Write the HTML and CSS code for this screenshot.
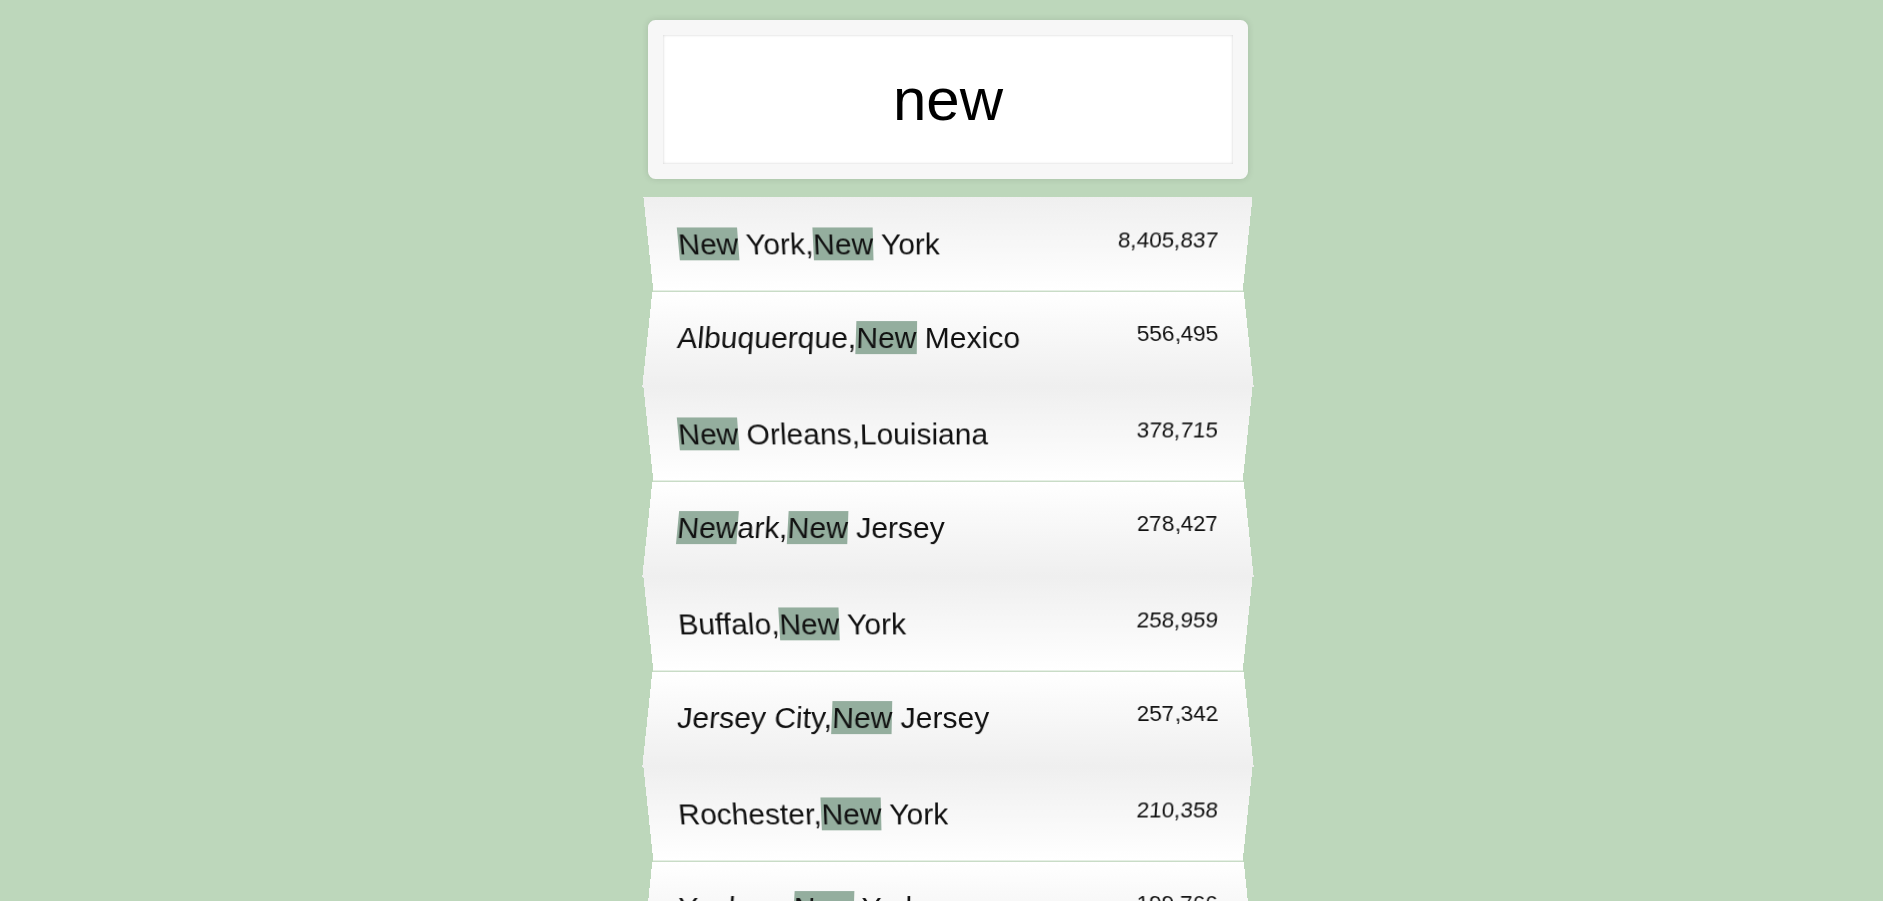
FILE: index.html
```html
<!DOCTYPE html>
<html lang="en">
<head>
<meta charset="UTF-8">
<title>Type Ahead</title>
<link rel="stylesheet" href="styles.css">
</head>
<body>
<form class="search-form">
  <input type="text" class="search" value="new" placeholder="City or State" spellcheck="true" autofocus>
  <ul class="suggestions">
    <li><span class="name"><span class="hl">New</span> York,<span class="hl">New</span> York</span><span class="population">8,405,837</span></li>
    <li><span class="name">Albuquerque,<span class="hl">New</span> Mexico</span><span class="population">556,495</span></li>
    <li><span class="name"><span class="hl">New</span> Orleans,Louisiana</span><span class="population">378,715</span></li>
    <li><span class="name"><span class="hl">New</span>ark,<span class="hl">New</span> Jersey</span><span class="population">278,427</span></li>
    <li><span class="name">Buffalo,<span class="hl">New</span> York</span><span class="population">258,959</span></li>
    <li><span class="name">Jersey City,<span class="hl">New</span> Jersey</span><span class="population">257,342</span></li>
    <li><span class="name">Rochester,<span class="hl">New</span> York</span><span class="population">210,358</span></li>
    <li><span class="name">Yonkers,<span class="hl">New</span> York</span><span class="population">199,766</span></li>
  </ul>
</form>
<script src="script.js"></script>
</body>
</html>
```

FILE: styles.css
```css
html {
  box-sizing: border-box;
  background: #bdd7bb;
  font-family: "Liberation Sans", Arial, sans-serif;
  font-size: 30px;
  font-weight: 200;
  overflow: hidden;
}

*, *::before, *::after {
  box-sizing: inherit;
}

body {
  margin: 0;
  padding-left: 13px;
}

.search-form {
  width: 600px;
  margin: 20px auto 0;
}

.search {
  display: block;
  width: 100%;
  margin: 0;
  padding: 30px;
  text-align: center;
  outline: 0;
  border: 15px solid #f7f7f7;
  border-radius: 7.5px;
  font-family: inherit;
  font-size: 60px;
  line-height: 69px;
  color: #000;
  caret-color: #000;
  background: #fff;
  position: relative;
  z-index: 2;
  box-shadow: 0 0 7.5px rgba(0, 0, 0, 0.12), inset 0 0 3px rgba(0, 0, 0, 0.19);
}

.suggestions {
  margin: 14px 0 0;
  padding: 0;
  position: relative;
}

.suggestions li {
  list-style: none;
  background: #fff;
  border-bottom: 1px solid #c9dcc7;
  margin: 0;
  padding: 30px;
  display: flex;
  justify-content: space-between;
  text-transform: capitalize;
  color: #111;
}

.suggestions li:nth-child(even) {
  transform: perspective(150px) rotateX(3deg) translateY(3px) scale(1.001);
  background: linear-gradient(to bottom, #ffffff 0%, #efefef 100%);
  border-bottom-color: #efefef;
}

.suggestions li:nth-child(odd) {
  transform: perspective(150px) rotateX(-3deg) translateY(4.5px);
  background: linear-gradient(to top, #ffffff 0%, #efefef 100%);
}

.population {
  font-size: 22.5px;
}

.hl {
  background: #94ae9e;
}
```

FILE: script.js
```js
const input = document.querySelector('.search');
input.focus();
input.setSelectionRange(input.value.length, input.value.length);
```
